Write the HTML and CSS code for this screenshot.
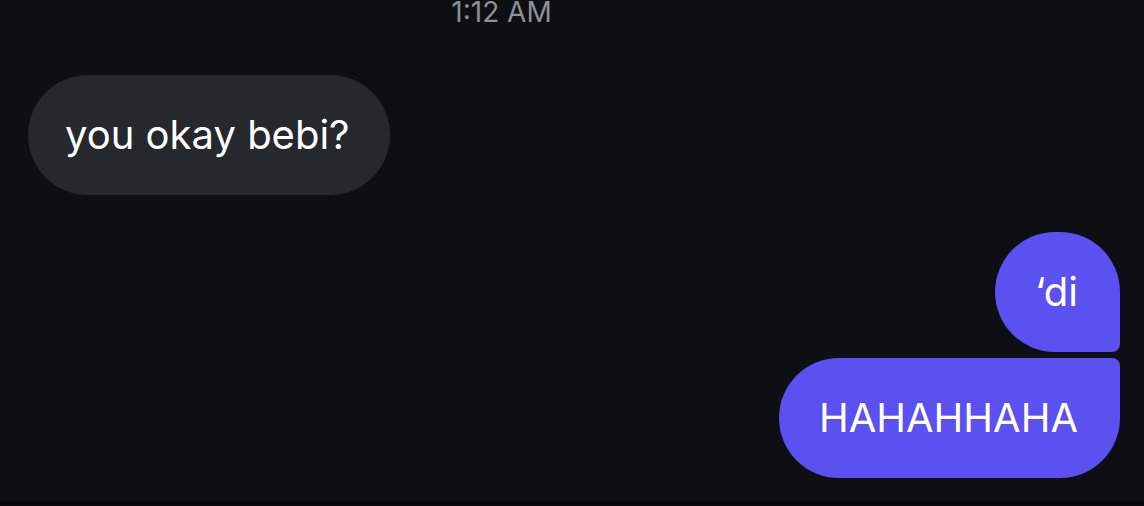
FILE: index.html
```html
<!DOCTYPE html>
<html lang="en">
<head>
    <meta charset="UTF-8">
    <meta name="viewport" content="width=device-width, initial-scale=1.0">
    <title>Chat</title>
    <link rel="stylesheet" href="styles.css">
</head>
<body>

<div class="chat">
    <div class="timestamp">1:12 AM</div>

    <!-- Incoming -->
    <div class="row incoming">
        <div class="bubble received">you okay bebi?</div>
    </div>

    <!-- Outgoing group -->
    <div class="row outgoing">
        <div class="bubble sent first">‘di</div>
        <div class="bubble sent last">HAHAHHAHA</div>
    </div>
</div>

<div class="bottom-bar"></div>

</body>
</html>
```

FILE: styles.css
```css
* {
    margin: 0;
    padding: 0;
    box-sizing: border-box;
}

body {
    font-family: Inter, "Noto Sans", sans-serif;
    background-color: #0d0f14;
    height: 506px;
    overflow: hidden;
    display: flex;
    flex-direction: column;
}

.chat {
    flex: 1;
    display: flex;
    flex-direction: column;
    padding: 0 24px 0 28px;
}

.timestamp {
    color: #8d9097;
    font-size: 28px;
    line-height: 28px;
    margin-top: -2px;
    text-align: center;
    padding-right: 145px;
}

.row {
    display: flex;
    flex-direction: column;
    gap: 6px;
}

.incoming {
    align-items: flex-start;
    margin-top: 49px;
}

.outgoing {
    align-items: flex-end;
    margin-top: 37px;
}

.bubble {
    color: #ffffff;
    font-size: 40px;
    line-height: 50px;
    padding: 35px 40px 35px 37px;
    border-radius: 60px;
}

.received {
    background-color: #25282d;
}

.sent {
    background-color: #5b50f0;
    padding-left: 40px;
    padding-right: 42px;
}

.sent.first {
    border-bottom-right-radius: 8px;
}

.sent.last {
    border-top-right-radius: 8px;
}

.bottom-bar {
    height: 5px;
    background-color: #08090c;
}
```
